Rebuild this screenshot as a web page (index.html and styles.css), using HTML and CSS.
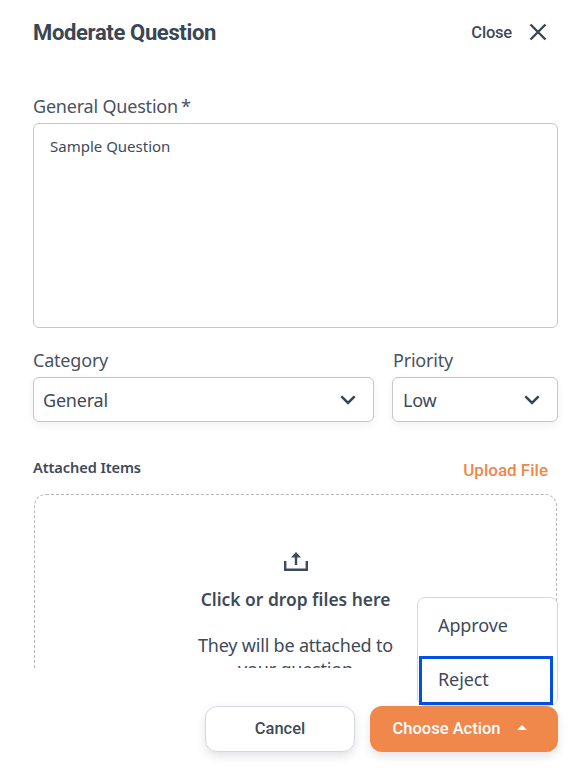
FILE: index.html
```html
<!DOCTYPE html>
<html lang="en">

<head>
  <meta charset="UTF-8">
  <meta name="viewport" content="width=device-width, initial-scale=1.0">
  <title>Moderate Question</title>
  <link rel="stylesheet" href="styles.css">
</head>

<body>
  <div class="modal">
    <div class="modal-scroll">
      <div class="modal-header">
        <h1 class="modal-title">Moderate Question</h1>
        <div class="close">
          <span class="close-label">Close</span>
          <svg class="close-icon" viewBox="0 0 18 18" width="18" height="18">
            <path d="M1.5 1.5 L16.5 16.5 M16.5 1.5 L1.5 16.5" />
          </svg>
        </div>
      </div>

      <label class="field-label question-label">General Question<span class="required">*</span></label>
      <div class="textarea">Sample Question</div>

      <div class="select-row">
        <div class="select-field category">
          <label class="field-label">Category</label>
          <div class="select">
            <span>General</span>
            <svg class="chevron" viewBox="0 0 16 10" width="16" height="10"><path d="M1.4 1.4 L8 8 L14.6 1.4" /></svg>
          </div>
        </div>
        <div class="select-field priority">
          <label class="field-label">Priority</label>
          <div class="select">
            <span>Low</span>
            <svg class="chevron" viewBox="0 0 16 10" width="16" height="10"><path d="M1.4 1.4 L8 8 L14.6 1.4" /></svg>
          </div>
        </div>
      </div>

      <div class="attached-header">
        <span class="attached-title">Attached Items</span>
        <a class="upload-link">Upload File</a>
      </div>

      <div class="dropzone">
        <svg class="upload-icon" viewBox="0 0 24 19" width="24" height="19">
          <path class="upload-tray" d="M1.2 9 V17.8 H22.8 V9" />
          <path class="upload-stem" d="M12 3 V13" />
          <path class="upload-head" d="M12 0 L17 5.5 H7 Z" />
        </svg>
        <div class="drop-title">Click or drop files here</div>
        <div class="drop-text">They will be attached to<br>your question</div>
      </div>
    </div>

    <div class="modal-footer">
      <button class="btn btn-cancel">Cancel</button>
      <button class="btn btn-action">Choose Action<span class="caret"></span></button>
      <!-- action menu opens above the button -->
      <div class="action-menu">
        <div class="menu-item">Approve</div>
        <div class="menu-item focused">Reject</div>
      </div>
    </div>
  </div>
</body>

</html>
```

FILE: styles.css
```css
html,
body {
  margin: 0;
  height: 100%;
  background-color: #fff;
}

body {
  font-family: "Noto Sans", Arial, sans-serif;
  color: #3e4a59;
}

.modal {
  width: 582px;
  height: 777px;
  overflow: hidden;
}

.modal-scroll {
  height: 668px;
  overflow: hidden;
  padding: 0 24px 0 33px;
  box-sizing: border-box;
}

.modal-header {
  display: flex;
  justify-content: space-between;
  align-items: center;
  height: 64px;
  padding-right: 11px;
}

.modal-title {
  margin: 0;
  font-family: Roboto, Arial, sans-serif;
  font-size: 22px;
  font-weight: 700;
  color: #3a4654;
  letter-spacing: -0.35px;
}

.close {
  display: flex;
  align-items: center;
  gap: 17px;
}

.close-label {
  font-family: Roboto, Arial, sans-serif;
  font-size: 16.5px;
  font-weight: 500;
  letter-spacing: -0.2px;
}

.close-icon path {
  fill: none;
  stroke: #3a4654;
  stroke-width: 2.4;
}

.field-label {
  display: block;
  font-size: 18px;
  line-height: 24px;
  letter-spacing: -0.2px;
  color: #48535f;
}

.question-label {
  margin-top: 30px;
  margin-bottom: 5px;
}

.required {
  margin-left: 3px;
}

.textarea {
  height: 205px;
  box-sizing: border-box;
  border: 1px solid #c4c6c9;
  border-radius: 6px;
  padding: 12px 16px;
  font-size: 15px;
  line-height: 20px;
}

.select-row {
  display: flex;
  gap: 18px;
  margin-top: 20px;
}

.select-field .field-label {
  margin-bottom: 5px;
}

.category {
  width: 341px;
}

.priority {
  width: 166px;
}

.priority .field-label {
  padding-left: 1px;
}

.priority .select {
  padding-left: 10px;
}

.select {
  height: 45px;
  box-sizing: border-box;
  display: flex;
  justify-content: space-between;
  align-items: center;
  border: 1px solid #c4c6c9;
  border-radius: 6px;
  padding: 0 17px 0 9px;
  font-size: 18px;
  letter-spacing: -0.2px;
  box-shadow: 0 3px 8px rgba(0, 0, 0, 0.06);
}

.chevron path {
  fill: none;
  stroke: #3a4654;
  stroke-width: 2.6;
}

.attached-header {
  display: flex;
  justify-content: space-between;
  align-items: center;
  margin-top: 38px;
  padding-right: 10px;
}

.attached-title {
  font-size: 14.6px;
  font-weight: 600;
  letter-spacing: -0.1px;
  position: relative;
  top: -3px;
}

.upload-link {
  font-family: Roboto, Arial, sans-serif;
  font-size: 17px;
  font-weight: 500;
  color: #f0884c;
}

.dropzone {
  margin: 14px 1px 0;
  height: 260px;
  box-sizing: border-box;
  border: 1px dashed #b4b7bb;
  border-radius: 12px;
  display: flex;
  flex-direction: column;
  align-items: center;
  padding: 57px 0 0;
  text-align: center;
}

.upload-tray,
.upload-stem {
  fill: none;
  stroke: #3e4a59;
  stroke-width: 2.4;
}

.upload-head {
  fill: #3e4a59;
}

.drop-title {
  margin-top: 16px;
  font-size: 17.4px;
  font-weight: 600;
  line-height: 24px;
}

.drop-text {
  margin-top: 22px;
  font-size: 18px;
  line-height: 24px;
  letter-spacing: -0.2px;
}

.modal-footer {
  position: relative;
  display: flex;
  justify-content: flex-end;
  gap: 15px;
  padding: 38px 24px 0 0;
}

.btn {
  height: 46px;
  border-radius: 12px;
  padding-bottom: 3px;
  font-family: Roboto, Arial, sans-serif;
  font-size: 16.5px;
  font-weight: 500;
  cursor: pointer;
  box-shadow: 0 4px 10px rgba(50, 60, 80, 0.14);
}

.btn-cancel {
  width: 150px;
  background-color: #fff;
  border: 1px solid #d5d9df;
  color: #3e4a59;
}

.btn-action {
  width: 188px;
  background-color: #f0884c;
  border: none;
  color: #fff;
  display: flex;
  justify-content: center;
  align-items: center;
  padding-right: 14px;
}

.caret {
  margin-left: 17px;
  margin-top: -1px;
  border-left: 5px solid transparent;
  border-right: 5px solid transparent;
  border-bottom: 5px solid #fff;
}

.action-menu {
  position: absolute;
  right: 24px;
  bottom: 46px;
  width: 141px;
  height: 109px;
  box-sizing: border-box;
  background-color: #fff;
  border: 1px solid #d5d9df;
  border-radius: 8px;
  padding: 0 4px 0 1px;
}

.menu-item {
  height: 58px;
  box-sizing: border-box;
  padding: 0 0 4px 19px;
  display: flex;
  align-items: center;
  font-size: 18px;
  letter-spacing: -0.1px;
}

.menu-item.focused {
  height: 49px;
  border: 3px solid #0050e6;
  padding-left: 16px;
}
```
